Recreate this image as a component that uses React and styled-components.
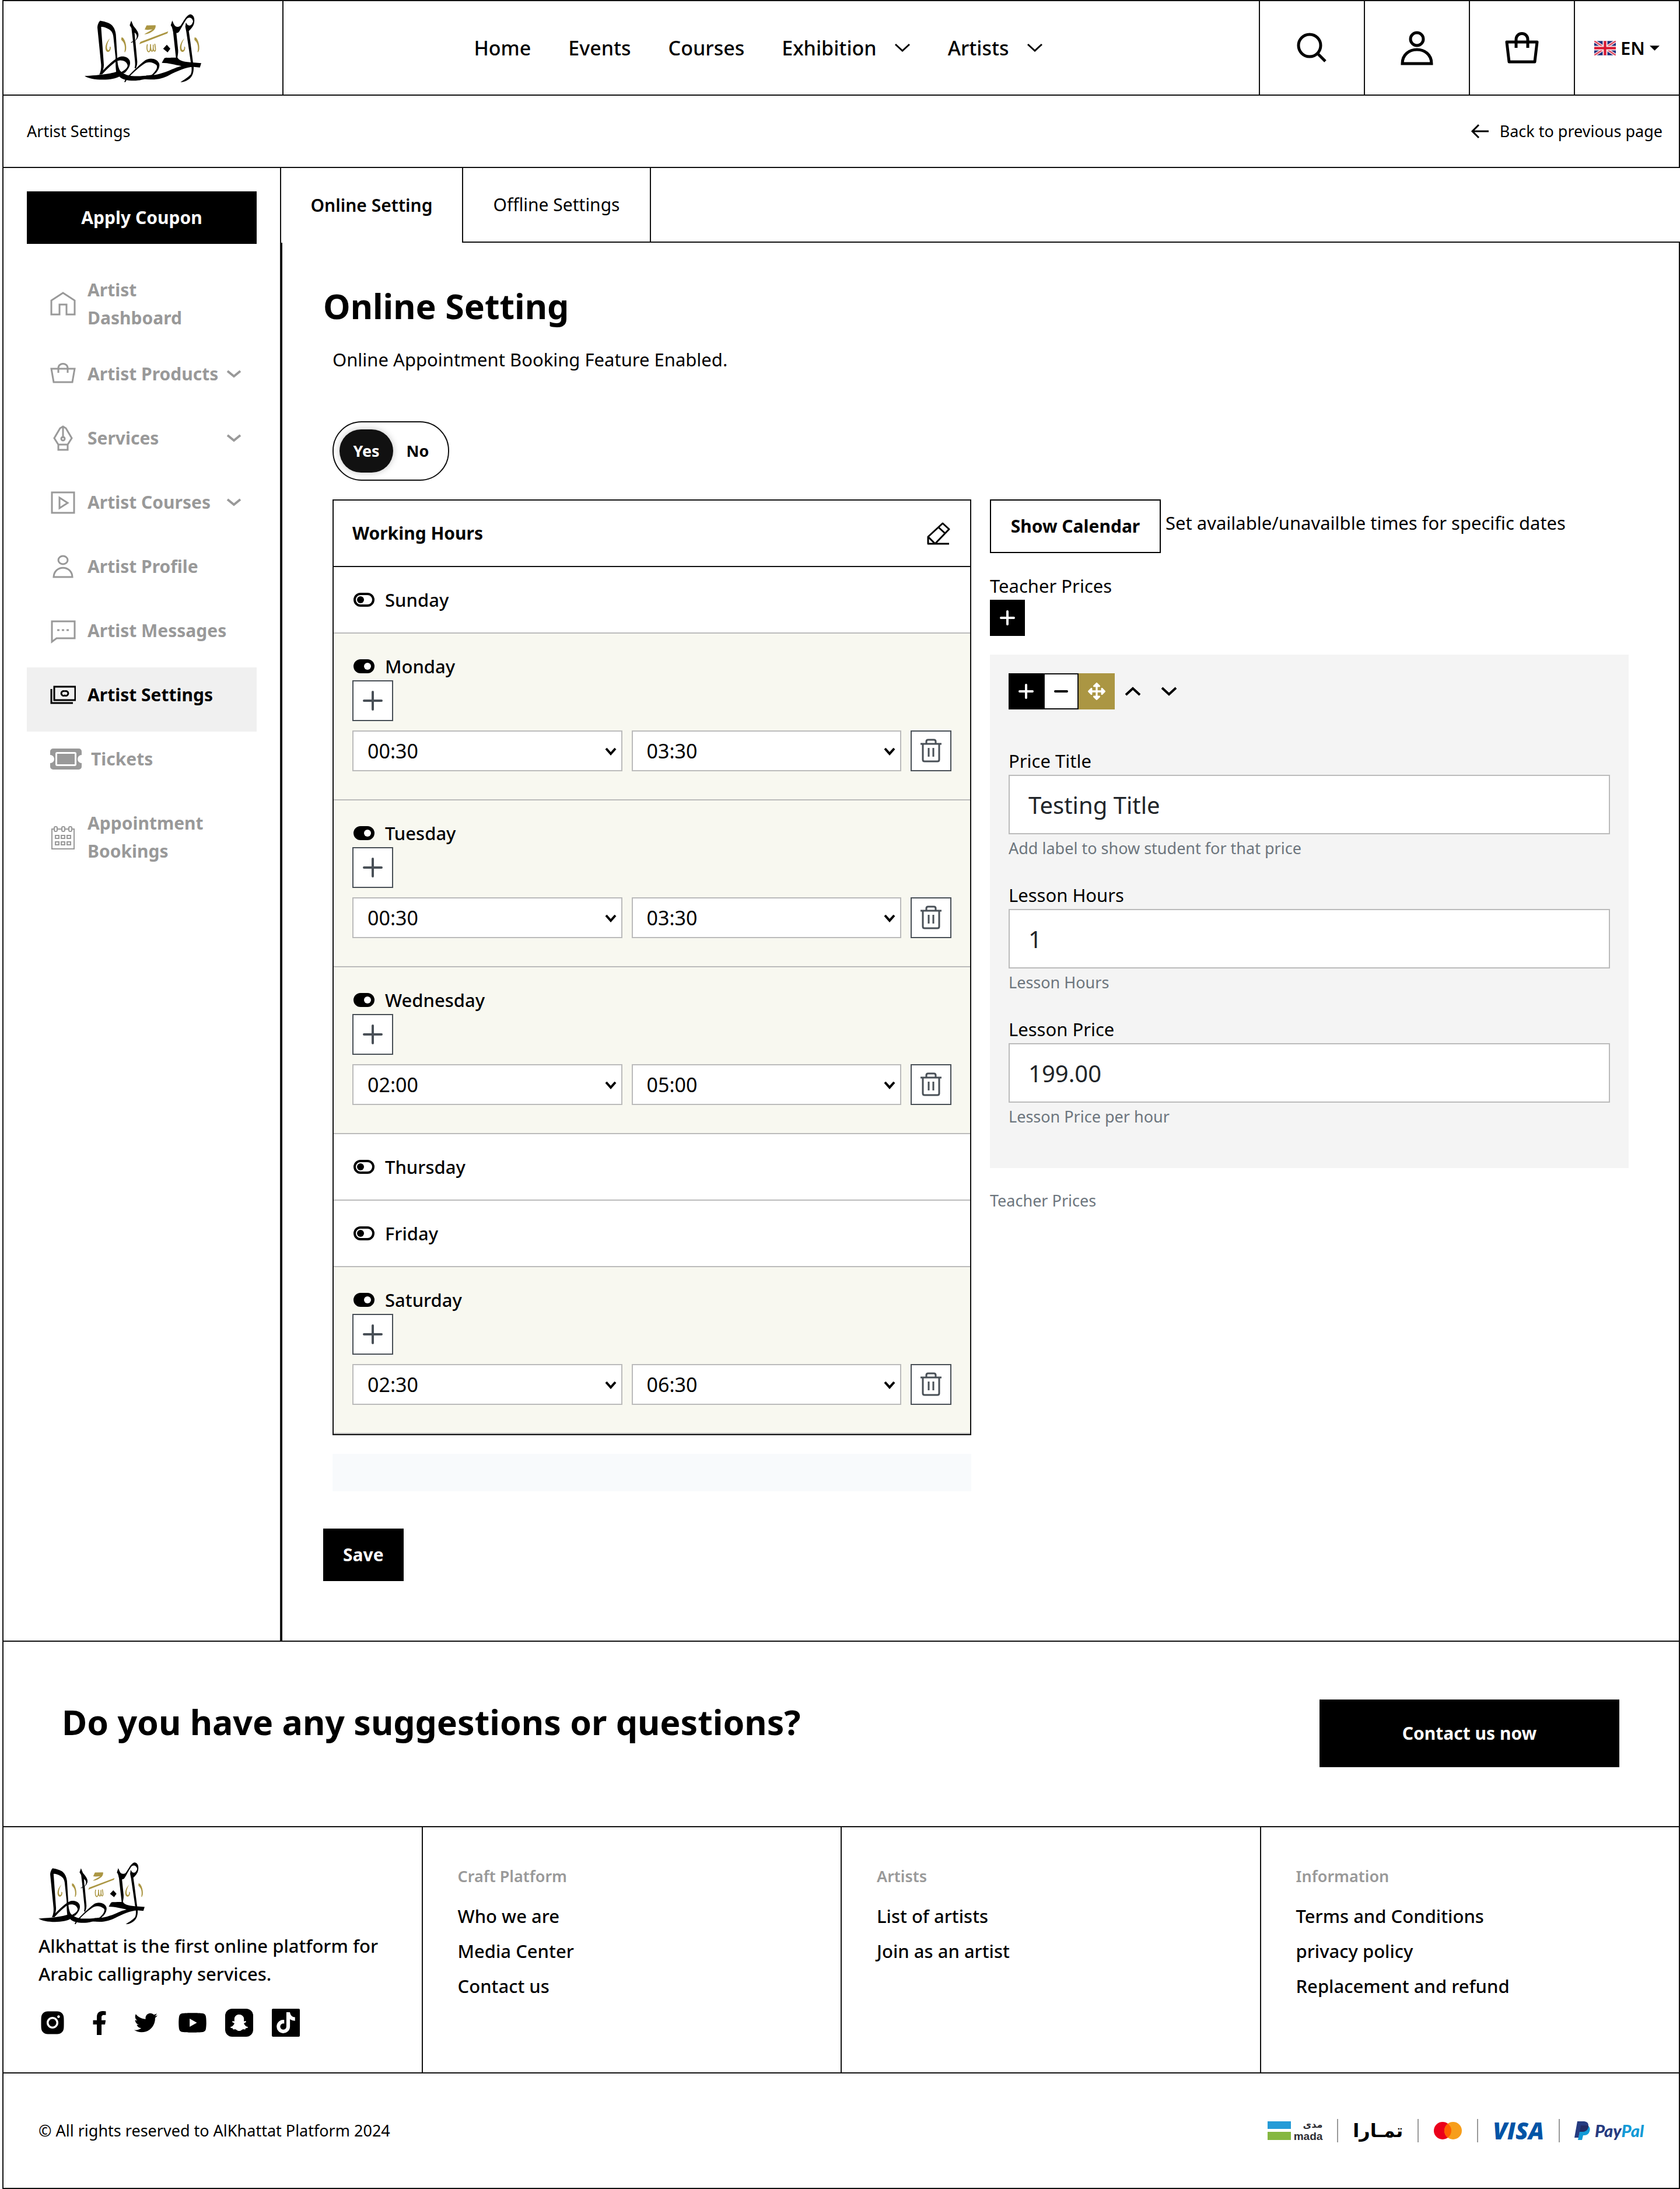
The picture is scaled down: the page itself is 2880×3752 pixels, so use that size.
import React, { useState } from 'react'
import styled, { createGlobalStyle } from 'styled-components'
import { FaFacebookF, FaTwitter, FaYoutube, FaArrowsAlt, FaSnapchatGhost, FaTiktok } from 'react-icons/fa'
import { AiFillInstagram } from 'react-icons/ai'

const GlobalStyle = createGlobalStyle`
  *, *::before, *::after {
    box-sizing: border-box;
  }
  body {
    margin: 0;
    background: #fff;
    color: #000;
    font-family: "Noto Sans", "Liberation Sans", sans-serif;
    font-size: 31px;
    line-height: 48px;
  }
  h1, h2, h3, p, ul {
    margin: 0;
    padding: 0;
  }
  ul {
    list-style: none;
  }
  a {
    color: inherit;
    text-decoration: none;
  }
  button, input, select {
    font: inherit;
    color: inherit;
    border-radius: 0;
  }
  svg {
    display: block;
    flex: none;
  }
`
const Page = styled.div`
  padding-left: 4px;
`
// header
const Header = styled.header`
  display: flex;
  height: 164px;
  border: 2px solid #111;
`
const LogoCell = styled.a`
  display: flex;
  justify-content: center;
  width: 480px;
  padding-top: 22px;
  border-right: 2px solid #111;
`
const Nav = styled.nav`
  display: flex;
  flex: 1;
  align-items: center;
  justify-content: center;
  gap: 64px;
  padding-right: 44px;
  font-size: 34px;
  font-weight: 500;
`
const NavLink = styled.a`
  display: flex;
  align-items: center;
  gap: 30px;
`
const HeaderCell = styled.button`
  display: flex;
  align-items: center;
  justify-content: center;
  gap: 8px;
  width: 180px;
  padding: 0;
  background: none;
  border: 0;
  border-left: 2px solid #111;
  font-size: 31px;
  font-weight: 600;
`
const Breadcrumb = styled.div`
  display: flex;
  align-items: center;
  justify-content: space-between;
  height: 124px;
  padding: 0 28px 0 40px;
  border: solid #111;
  border-width: 0 2px 2px;
  font-size: 27px;
`
const BackLink = styled.a`
  display: flex;
  align-items: center;
  gap: 18px;
`
// body
const Main = styled.main`
  display: flex;
  align-items: stretch;
`
const Sidebar = styled.aside`
  width: 478px;
  flex: none;
  padding: 40px;
  border: solid #111;
  border-width: 0 2px;
`
const DarkButton = styled.button`
  display: block;
  width: ${props => props.$wide ? '100%' : 'auto'};
  height: 90px;
  padding: 0 34px;
  background: #000;
  color: #fff;
  border: 0;
  font-size: 30px;
  font-weight: 700;
`
const Menu = styled.ul`
  margin-top: 32px;
`
const MenuLink = styled.a`
  display: flex;
  align-items: flex-start;
  min-height: 110px;
  padding: 23px 26px 25px 40px;
  background: ${props => props.$active ? '#f0f0f0' : 'none'};
  color: ${props => props.$active ? '#000' : '#999'};
  font-size: 30px;
  font-weight: 700;
`
const MenuRow = styled.span`
  display: flex;
  flex: 1;
  align-items: center;
`
const MenuText = styled.span`
  flex: 1;
  margin-left: ${props => props.$wideIcon ? '16px' : '20px'};
  padding-right: ${props => props.$oneLine ? '0' : '16px'};
  white-space: ${props => props.$oneLine ? 'nowrap' : 'normal'};
`
const Content = styled.section`
  flex: 1;
  display: flex;
  flex-direction: column;
`
const Tabs = styled.div`
  display: flex;
  height: 128px;
`
const Tab = styled.button`
  width: ${props => props.$active ? '312px' : '322px'};
  padding: 0;
  background: none;
  border: solid #111;
  border-width: ${props => props.$active ? '0 2px 0 0' : '0 2px 2px 0'};
  font-size: 30px;
  font-weight: ${props => props.$active ? 600 : 400};
`
const TabsRest = styled.div`
  flex: 1;
  border-bottom: 2px solid #111;
`
const Body = styled.div`
  flex: 1;
  padding: 68px 70px 102px;
  border: solid #111;
  border-width: 0 2px;
`
const Title = styled.h1`
  font-size: 59px;
  line-height: 80px;
  font-weight: 700;
`
const Inner = styled.div`
  padding: 28px 16px 0;
  margin-bottom: 64px;
`
const Intro = styled.p`
  color: #000;
`
const Switch = styled.div`
  display: flex;
  width: 200px;
  height: 102px;
  margin: 82px 0 32px;
  padding: 12px 10px;
  border: 2px solid #111;
  border-radius: 50px;
`
const SwitchOption = styled.label`
  display: flex;
  align-items: center;
  justify-content: center;
  width: ${props => props.$on ? '92px' : '84px'};
  background: ${props => props.$on ? '#111' : 'none'};
  color: ${props => props.$on ? '#fff' : '#000'};
  box-shadow: ${props => props.$on ? '0 0 12px rgba(0, 0, 0, .25)' : 'none'};
  border-radius: 37px;
  font-size: 27px;
  font-weight: 700;
  input {
    position: absolute;
    opacity: 0;
  }
`
const Columns = styled.div`
  display: grid;
  grid-template-columns: 1fr 1fr;
  gap: 32px;
`
const Hours = styled.div`
  border: 2px solid #111;
`
const HoursHead = styled.div`
  display: flex;
  align-items: center;
  justify-content: space-between;
  height: 114px;
  padding: 0 34px 0 32px;
  border-bottom: 2px solid #111;
  h3 {
    font-size: 30px;
    font-weight: 700;
  }
`
const PlainButton = styled.button`
  padding: 0;
  background: none;
  border: 0;
`
const Day = styled.div`
  padding: 32px 32px ${props => props.$open ? '48px' : '32px'};
  background: ${props => props.$open ? '#f8f8f0' : '#fff'};
  border-bottom: 2px solid #bbb;
`
const DayLabel = styled.label`
  display: flex;
  align-items: center;
  gap: 16px;
  font-weight: 500;
  input {
    position: absolute;
    opacity: 0;
  }
`
const SquareButton = styled.button`
  display: flex;
  align-items: center;
  justify-content: center;
  width: 70px;
  height: 70px;
  padding: 0;
  background: #fff;
  border: 2px solid #495057;
  color: #495057;
`
const SlotRow = styled.div`
  display: flex;
  gap: 16px;
  margin-top: 16px;
`
const SelectBox = styled.div`
  position: relative;
  flex: 1;
  select {
    appearance: none;
    width: 100%;
    height: 70px;
    padding: 0 24px;
    background: #fff;
    border: 2px solid #bbb;
    font-size: 34px;
  }
  svg {
    position: absolute;
    right: 10px;
    top: 29px;
    pointer-events: none;
  }
`
const EmptyNotice = styled.div`
  height: 64px;
  margin-top: 32px;
  background: #f8fafc;
`
const CalendarRow = styled.div`
  display: flex;
  gap: 8px;
  margin-bottom: 32px;
  p {
    padding-top: 16px;
  }
`
const OutlineButton = styled.button`
  width: 293px;
  height: 92px;
  padding: 0;
  background: #fff;
  border: 2px solid #000;
  font-size: 30px;
  font-weight: 700;
`
const ToolButton = styled.button`
  display: flex;
  align-items: center;
  justify-content: center;
  width: ${props => props.$kind === 'gold' || props.$kind === 'none' ? '62px' : '60px'};
  height: 62px;
  padding: 0;
  border: ${props => props.$kind === 'light' ? '2px solid #111' : '0'};
  background: ${props => ({ dark: '#000', light: '#fff', gold: '#ab9643', none: 'none' })[props.$kind]};
  color: ${props => props.$kind === 'dark' || props.$kind === 'gold' ? '#fff' : '#000'};
`
const PricePanel = styled.div`
  margin-top: 32px;
  padding: 32px;
  background: #f4f4f4;
`
const Toolbar = styled.div`
  display: flex;
  margin-bottom: 64px;
`
const Field = styled.div`
  margin-bottom: 34px;
  label {
    display: block;
  }
  input {
    display: block;
    width: 100%;
    height: 102px;
    margin-bottom: 2px;
    padding: 0 32px;
    background: #fff;
    border: 2px solid #bbb;
    color: #212529;
    font-size: 40px;
  }
`
const Hint = styled.p`
  margin-top: ${props => props.$spaced ? '34px' : '0'};
  color: #6c757d;
  font-size: 27px;
  line-height: 44px;
`
// footer
const Contact = styled.section`
  display: flex;
  justify-content: space-between;
  height: 320px;
  padding: 99px 102px 0 100px;
  border: 2px solid #111;
  h2 {
    font-size: 59px;
    line-height: 76px;
    font-weight: 700;
  }
`
const ContactLink = styled.a`
  width: 514px;
  height: 116px;
  background: #000;
  color: #fff;
  font-size: 30px;
  line-height: 116px;
  font-weight: 700;
  text-align: center;
`
const FooterGrid = styled.div`
  display: grid;
  grid-template-columns: repeat(4, 1fr);
  height: 422px;
  border: solid #111;
  border-width: 0 0 2px 2px;
`
const FooterCol = styled.div`
  padding: 60px;
  border-right: 2px solid #111;
  font-weight: 500;
  h3 {
    margin-bottom: 20px;
    color: #999;
    font-size: 27px;
    font-weight: 600;
  }
  li {
    margin-bottom: 12px;
  }
  p {
    margin-top: 12px;
  }
`
const Socials = styled.div`
  display: flex;
  gap: 32px;
  margin-top: 36px;
`
const Social = styled.a`
  display: flex;
  align-items: center;
  justify-content: center;
  width: 48px;
  height: 48px;
`
const SocialTile = styled.span`
  display: flex;
  align-items: center;
  justify-content: center;
  width: 48px;
  height: 48px;
  background: #000;
  color: #fff;
  border-radius: ${props => props.$round ? '12px' : '2px'};
`
const Bottom = styled.div`
  display: flex;
  align-items: center;
  justify-content: space-between;
  height: 198px;
  padding: 0 60px;
  border: solid #111;
  border-width: 0 2px 2px;
  font-size: 27px;
`
const Payments = styled.div`
  display: flex;
  align-items: center;
`
const Payment = styled.div`
  display: flex;
  align-items: center;
  height: 40px;
  padding: 0 25px;
  border-left: ${props => props.$first ? '0' : '2px solid #999'};
  &:last-child {
    padding-right: 0;
  }
`
const MadaNames = styled.div`
  display: flex;
  flex-direction: column;
  align-items: flex-end;
  margin-left: 5px;
  color: #2d2d33;
  font-weight: 700;
`
const MadaArabic = styled.span`
  font-family: "DejaVu Sans", sans-serif;
  font-size: 16px;
  line-height: 19px;
`
const MadaLatin = styled.span`
  font-family: "Liberation Sans", sans-serif;
  font-size: 19px;
  line-height: 22px;
`
const TamaraText = styled.span`
  font-family: "DejaVu Sans", sans-serif;
  font-size: 32px;
  line-height: 40px;
  font-weight: 700;
`
const VisaText = styled.span`
  color: #0054a6;
  font-family: "Open Sans", sans-serif;
  font-size: 40px;
  line-height: 40px;
  font-style: italic;
  font-weight: 800;
`
const PayPalText = styled.span`
  margin-left: 8px;
  color: #263b80;
  font-family: Lato, sans-serif;
  font-size: 29px;
  line-height: 32px;
  font-style: italic;
  font-weight: 900;
  b {
    color: #139ad6;
  }
`

const Icon = ({ w = 44, h = 44, sw = 2, children }) => (
  <svg width={ w } height={ h } viewBox={ `0 0 ${w} ${h}` } fill="none" stroke="currentColor" strokeWidth={ sw } aria-hidden="true">
    {children}
  </svg>
)
const Chevron = ({ w = 26, h = 14, sw = 4, up }) => (
  <Icon w={ w } h={ h } sw={ sw }>
    <path d={ up ? `M2 ${h - 2}L${w / 2} 3L${w - 2} ${h - 2}` : `M2 2L${w / 2} ${h - 3}L${w - 2} 2` } />
  </Icon>
)
const Plus = ({ size, sw }) => (
  <Icon w={ size } h={ size } sw={ sw }>
    <path strokeLinecap="round" d={ `M${size / 2} 2V${size - 2}M2 ${size / 2}H${size - 2}` } />
  </Icon>
)

function Logo ({ width, height }) {
  return (
    <svg width={ width } height={ height } viewBox="27 25 600 353" role="img" aria-label="Alkhattat">
      <path d="M107 59C125 62 150 68 165 80C178 92 185 108 188 130L195 245C196 280 200 305 215 325L192 337C185 300 187 270 186 245L176 150C174 125 168 112 150 102C135 93 120 89 112 91L126 285C126 305 120 325 110 334L104 334C110 320 113 305 112 285L93 95C93 80 100 65 107 59Z" />
      <path d="M27 343C60 341 110 338 150 331C175 327 195 321 207 314C225 332 245 341 270 343C310 345 345 343 385 335L372 358C345 360 335 358 320 363C290 371 225 370 206 346C190 355 160 362 120 362C80 362 45 355 27 343Z" />
      <path d="M102 335C130 305 170 263 200 248C222 237 250 245 259 264C267 287 250 312 235 326L213 335L205 328C235 315 250 300 248 288C242 264 215 258 190 268C165 285 135 315 117 335Z" />
      <path d="M267 59L278 85C295 105 306 120 304 135C302 150 290 165 268 172L264 170L276 165L268 97L259 82ZM284 120L287 160C298 150 300 130 284 120Z" fillRule="evenodd" />
      <path d="M275 160L288 160L298 270C298 285 295 295 290 305L284 302C288 290 287 280 286 265Z" />
      <path d="M231 374L239 356C265 330 300 293 338 263C365 245 402 255 411 280C416 300 400 325 385 335L365 344C393 320 405 300 397 287C376 270 350 268 330 283C300 303 263 338 244 362L237 375Z" />
      <path d="M424 276L436 254C440 248 455 250 505 249C512 262 530 270 570 273L627 277L620 300L590 297C550 296 500 320 460 340C430 355 390 368 335 358L345 340C380 344 430 330 470 312C495 300 510 296 525 292C490 286 460 276 424 276Z" />
      <path d="M478 58L486 77C495 95 510 92 520 85C535 65 550 30 570 26C590 28 595 50 590 72C588 85 575 102 563 112L570 160L588 300C588 330 580 355 550 368C540 373 530 375 520 375C535 365 560 350 573 335C580 320 578 300 575 285L550 115L545 90L548 68L556 80C570 90 580 80 585 62C580 40 560 38 550 52C535 75 525 95 515 112C510 122 500 122 499 122L508 210C509 225 506 240 504 250L497 250L482 115C478 100 478 92 470 83Z" />
      <path d="M450 183L468 203L454 222L431 203Z" />
      <g fill="#ab9643">
        <path d="M346 83L392 82C394 90 390 100 385 106C370 120 350 130 334 129C345 120 365 112 376 104L350 106L336 104Z" />
        <path d="M308 180L314 168L457 114L453 124Z" />
        <path d="M216 145L224 146C240 165 243 195 240 210L235 221L232 220C237 195 234 172 216 158Z" />
        <path d="M592 145L600 146C616 165 619 195 616 210L611 221L608 220C613 195 610 172 592 158Z" />
        <path d="M158 150C140 165 128 195 138 214C150 228 164 212 161 194L156 192C158 210 148 216 143 204C140 190 145 168 158 150Z" />
        <path d="M541 150C523 165 511 195 521 214C533 228 547 212 544 194L539 192C541 210 531 216 526 204C523 190 528 168 541 150Z" />
      </g>
      <path d="M350 180C345 200 349 220 358 219C367 216 366 200 366 180C366 200 368 217 375 216C382 212 380 195 380 182M380 200C382 222 394 220 391 198L388 178" fill="none" stroke="#ab9643" strokeWidth="5" />
    </svg>
  )
}

const menuIcons = {
  home: <path d="M2 40V16L22 3L42 16V40H28V23H16V40Z" />,
  bag: <path d="M2 13H42L38 36H6ZM14 20V12C14 2 30 2 30 12V20" />,
  pen: <path d="M22 3V22M17 5L7 22L14 33H30L37 22L27 5L22 2ZM14 33V42H30V33M22 20A3 3 0 1 1 22 26A3 3 0 1 1 22 20" />,
  play: <path d="M3 5H41V40H3ZM16 14V32L30 23Z" />,
  user: <path d="M22 4A8 7 0 1 1 22 18A8 7 0 1 1 22 4M6 40C7 19 37 19 38 40Z" />,
  chat: <path d="M3 6H42V35H11L3 41ZM12 21H16M20 21H24M28 21H32" />,
  money: <path d="M7 8H43V31H7ZM2 12V36H39M25 16A4 4 0 1 1 25 23A4 4 0 1 1 25 16" />,
  calendar: (
    <g strokeWidth="2">
      <path d="M7 8H3V42H41V8H37M13 8H20M25 8H31" />
      <rect x="7" y="4" width="5" height="8" rx="2" />
      <rect x="20" y="4" width="5" height="8" rx="2" />
      <rect x="32" y="4" width="5" height="8" rx="2" />
      <path d="M9 19H15V24H9ZM19 19H25V24H19ZM29 19H35V24H29ZM9 30H15V35H9ZM19 30H25V35H19ZM29 30H35V35H29Z" />
    </g>
  )
}
const menu = [
  { text: 'Artist Dashboard', icon: 'home' },
  { text: 'Artist Products', icon: 'bag', more: true },
  { text: 'Services', icon: 'pen', more: true },
  { text: 'Artist Courses', icon: 'play', more: true },
  { text: 'Artist Profile', icon: 'user' },
  { text: 'Artist Messages', icon: 'chat' },
  { text: 'Artist Settings', icon: 'money', active: true },
  { text: 'Tickets', icon: 'ticket' },
  { text: 'Appointment Bookings', icon: 'calendar' }
]
const week = [
  { name: 'Sunday' },
  { name: 'Monday', from: '00:30', to: '03:30' },
  { name: 'Tuesday', from: '00:30', to: '03:30' },
  { name: 'Wednesday', from: '02:00', to: '05:00' },
  { name: 'Thursday' },
  { name: 'Friday' },
  { name: 'Saturday', from: '02:30', to: '06:30' }
]
const times = Array(48).fill('').map((_, i) => `${String(Math.floor(i / 2)).padStart(2, '0')}:${i % 2 ? '30' : '00'}`)
const fields = [
  { id: 'price-title', label: 'Price Title', value: 'Testing Title', hint: 'Add label to show student for that price' },
  { id: 'lesson-hours', label: 'Lesson Hours', value: '1', hint: 'Lesson Hours' },
  { id: 'lesson-price', label: 'Lesson Price', value: '199.00', hint: 'Lesson Price per hour' }
]
const footerLinks = [
  { title: 'Craft Platform', links: ['Who we are', 'Media Center', 'Contact us'] },
  { title: 'Artists', links: ['List of artists', 'Join as an artist'] },
  { title: 'Information', links: ['Terms and Conditions', 'privacy policy', 'Replacement and refund'] }
]

function TicketIcon () {
  return (
    <svg width="54" height="36" viewBox="0 0 54 36" fill="currentColor" aria-hidden="true">
      <path fillRule="evenodd" d="M5 0H49A5 5 0 0 1 54 5V11A7 7 0 0 0 54 25V31A5 5 0 0 1 49 36H5A5 5 0 0 1 0 31V25A7 7 0 0 0 0 11V5A5 5 0 0 1 5 0ZM12 6A3 3 0 0 0 9 9V27A3 3 0 0 0 12 30H42A3 3 0 0 0 45 27V9A3 3 0 0 0 42 6Z" />
      <rect x="12" y="9" width="30" height="18" />
    </svg>
  )
}

function Flag () {
  return (
    <svg width="37" height="25" viewBox="0 0 36 24" aria-hidden="true">
      <path fill="#1b2f7d" d="M0 0H36V24H0Z" />
      <path stroke="#f3d9de" strokeWidth="5" d="M0 0L36 24M36 0L0 24" />
      <path stroke="#e0435a" strokeWidth="2" d="M0 0L36 24M36 0L0 24" />
      <path stroke="#f6e3e6" strokeWidth="8" d="M18 0V24M0 12H36" />
      <path stroke="#d8152f" strokeWidth="4" d="M18 0V24M0 12H36" />
    </svg>
  )
}

function TimeSelect ({ label, value }) {
  return (
    <SelectBox>
      <select aria-label={ label } defaultValue={ value }>
        {times.map((time) => <option key={ time }>{time}</option>)}
      </select>
      <Chevron w={ 20 } h={ 14 } />
    </SelectBox>
  )
}

function DayRow ({ day }) {
  const [open, setOpen] = useState(Boolean(day.from))
  return (
    <Day $open={ open }>
      <DayLabel>
        <input type="checkbox" checked={ open } onChange={ () => setOpen(!open) } />
        <Icon w={ 40 } h={ 24 } sw={ 4 }>
          <rect x="4" y="2" width="32" height="20" rx="10" fill={ open ? '#000' : 'none' } />
          <circle cx={ open ? 26 : 14 } cy="12" r="6" fill={ open ? '#fff' : '#000' } stroke="none" />
        </Icon>
        {day.name}
      </DayLabel>
      {open && <>
        <SquareButton type="button" aria-label={ 'Add time to ' + day.name }>
          <Plus size={ 34 } sw={ 4 } />
        </SquareButton>
        <SlotRow>
          <TimeSelect label={ day.name + ' from' } value={ day.from } />
          <TimeSelect label={ day.name + ' to' } value={ day.to } />
          <SquareButton type="button" aria-label="Remove time">
            <Icon w={ 36 } h={ 42 } sw={ 3 }>
              <path d="M0 9H36M4 9V36Q4 39 7 39H29Q32 39 32 36V9M10 9V5Q10 2 13 2H23Q26 2 26 5V9M14 16V31M22 16V31" />
            </Icon>
          </SquareButton>
        </SlotRow>
      </>}
    </Day>
  )
}

function SiteHeader () {
  return (
    <>
      <Header>
        <LogoCell href="#"><Logo width={ 200 } height={ 118 } /></LogoCell>
        <Nav>
          <NavLink href="#">Home</NavLink>
          <NavLink href="#">Events</NavLink>
          <NavLink href="#">Courses</NavLink>
          <NavLink href="#">Exhibition <Chevron w={ 28 } h={ 16 } sw={ 3 } /></NavLink>
          <NavLink href="#">Artists <Chevron w={ 28 } h={ 16 } sw={ 3 } /></NavLink>
        </Nav>
        <HeaderCell type="button" aria-label="Search">
          <Icon w={ 54 } h={ 54 } sw={ 5 }><circle cx="23" cy="23" r="19" /><path d="M37 37L50 50" /></Icon>
        </HeaderCell>
        <HeaderCell type="button" aria-label="Account">
          <Icon w={ 56 } h={ 60 } sw={ 5 }><circle cx="28" cy="15" r="11" /><path d="M3 57C3 25 53 25 53 57Z" /></Icon>
        </HeaderCell>
        <HeaderCell type="button" aria-label="Cart">
          <Icon w={ 58 } h={ 56 } sw={ 5 }><path strokeLinejoin="round" d="M3 18H55L51 52H7ZM19 28V14C19 0 39 0 39 14V28" /></Icon>
        </HeaderCell>
        <HeaderCell type="button">
          <Flag />EN
          <svg width="17" height="9" viewBox="0 0 16 8" aria-hidden="true"><path d="M0 0H16L8 8Z" /></svg>
        </HeaderCell>
      </Header>
      <Breadcrumb>
        <span>Artist Settings</span>
        <BackLink href="#">
          <Icon w={ 32 } h={ 26 } sw={ 3 }><path d="M31 13H3M14 2L3 13L14 24" /></Icon>
          Back to previous page
        </BackLink>
      </Breadcrumb>
    </>
  )
}

function SideMenu () {
  return (
    <Sidebar>
      <DarkButton type="button" $wide>Apply Coupon</DarkButton>
      <Menu>
        {menu.map((item) => (
          <li key={ item.text }>
            <MenuLink href="#" $active={ item.active }>
              <MenuRow>
                {item.icon === 'ticket' ? <TicketIcon /> : <Icon sw={ 3 }>{menuIcons[item.icon]}</Icon>}
                <MenuText $wideIcon={ item.icon === 'ticket' } $oneLine={ item.more }>{item.text}</MenuText>
                {item.more && <Chevron />}
              </MenuRow>
            </MenuLink>
          </li>
        ))}
      </Menu>
    </Sidebar>
  )
}

function Prices () {
  return (
    <div>
      <CalendarRow>
        <OutlineButton type="button">Show Calendar</OutlineButton>
        <p>Set available/unavailble times for specific dates</p>
      </CalendarRow>
      <p>Teacher Prices</p>
      <ToolButton type="button" $kind="dark" aria-label="Add price"><Plus size={ 26 } sw={ 4 } /></ToolButton>
      <PricePanel>
        <Toolbar>
          <ToolButton type="button" $kind="dark" aria-label="Add"><Plus size={ 26 } sw={ 4 } /></ToolButton>
          <ToolButton type="button" $kind="light" aria-label="Remove">
            <Icon w={ 26 } h={ 26 } sw={ 4 }><path strokeLinecap="round" d="M3 13H23" /></Icon>
          </ToolButton>
          <ToolButton type="button" $kind="gold" aria-label="Move"><FaArrowsAlt size={ 30 } /></ToolButton>
          <ToolButton type="button" $kind="none" aria-label="Up"><Chevron up w={ 28 } h={ 16 } /></ToolButton>
          <ToolButton type="button" $kind="none" aria-label="Down"><Chevron w={ 28 } h={ 16 } /></ToolButton>
        </Toolbar>
        {fields.map((field) => (
          <Field key={ field.id }>
            <label htmlFor={ field.id }>{field.label}</label>
            <input id={ field.id } type="text" defaultValue={ field.value } />
            <Hint>{field.hint}</Hint>
          </Field>
        ))}
      </PricePanel>
      <Hint $spaced>Teacher Prices</Hint>
    </div>
  )
}

function SiteFooter () {
  return (
    <footer>
      <Contact>
        <h2>Do you have any suggestions or questions?</h2>
        <ContactLink href="#">Contact us now</ContactLink>
      </Contact>
      <FooterGrid>
        <FooterCol>
          <Logo width={ 182 } height={ 107 } />
          <p>Alkhattat is the first online platform for Arabic calligraphy services.</p>
          <Socials>
            <Social href="#" aria-label="Instagram"><AiFillInstagram size={ 50 } /></Social>
            <Social href="#" aria-label="Facebook"><FaFacebookF size={ 41 } /></Social>
            <Social href="#" aria-label="Twitter"><FaTwitter size={ 40 } /></Social>
            <Social href="#" aria-label="Youtube"><FaYoutube size={ 50 } /></Social>
            <Social href="#" aria-label="Snapchat"><SocialTile $round><FaSnapchatGhost size={ 30 } /></SocialTile></Social>
            <Social href="#" aria-label="TikTok"><SocialTile><FaTiktok size={ 36 } /></SocialTile></Social>
          </Socials>
        </FooterCol>
        {footerLinks.map((col) => (
          <FooterCol key={ col.title }>
            <h3>{col.title}</h3>
            <ul>
              {col.links.map((link) => <li key={ link }><a href="#">{link}</a></li>)}
            </ul>
          </FooterCol>
        ))}
      </FooterGrid>
      <Bottom>
        <span>© All rights reserved to AlKhattat Platform 2024</span>
        <Payments>
          <Payment $first>
            <svg width="40" height="32" viewBox="0 0 40 32" aria-hidden="true">
              <path fill="#259bd7" d="M0 0H40V13H0Z" />
              <path fill="#85b740" d="M0 18H40V32H0Z" />
            </svg>
            <MadaNames>
              <MadaArabic>مدى</MadaArabic>
              <MadaLatin>mada</MadaLatin>
            </MadaNames>
          </Payment>
          <Payment><TamaraText>تمـارا</TamaraText></Payment>
          <Payment>
            <svg width="50" height="32" viewBox="0 0 50 32" role="img" aria-label="Mastercard">
              <circle cx="16" cy="16" r="15" fill="#eb001b" />
              <circle cx="34" cy="16" r="15" fill="#f79e1b" />
              <path fill="#ff5f00" d="M25 4A15 15 0 0 1 25 28A15 15 0 0 1 25 4Z" />
            </svg>
          </Payment>
          <Payment><VisaText>VISA</VisaText></Payment>
          <Payment>
            <svg width="27" height="32" viewBox="0 0 27 32" aria-hidden="true">
              <path fill="#139ad6" d="M11 7H23Q28 11 26 17Q24 24 17 24H15L13 32H6Z" />
              <path fill="#263b80" d="M5 0H17Q25 1 24 9Q22 18 13 18H9L7 28H0Z" />
              <path fill="#232c65" d="M11 7H23Q25 8 24 10Q22 18 13 18H9Z" />
            </svg>
            <PayPalText>Pay<b>Pal</b></PayPalText>
          </Payment>
        </Payments>
      </Bottom>
    </footer>
  )
}

export default function App () {
  const [enabled, setEnabled] = useState('Yes')
  return (
    <Page>
      <GlobalStyle />
      <SiteHeader />
      <Main>
        <SideMenu />
        <Content>
          <Tabs>
            <Tab type="button" $active>Online Setting</Tab>
            <Tab type="button">Offline Settings</Tab>
            <TabsRest />
          </Tabs>
          <Body>
            <Title>Online Setting</Title>
            <Inner>
              <Intro>Online Appointment Booking Feature Enabled.</Intro>
              <Switch>
                {['Yes', 'No'].map((option) => (
                  <SwitchOption key={ option } $on={ enabled === option }>
                    <input type="radio" name="enabled" checked={ enabled === option } onChange={ () => setEnabled(option) } />
                    {option}
                  </SwitchOption>
                ))}
              </Switch>
              <Columns>
                <div>
                  <Hours>
                    <HoursHead>
                      <h3>Working Hours</h3>
                      <PlainButton type="button" aria-label="Edit working hours">
                        <Icon w={ 40 } h={ 40 } sw={ 3 }>
                          <path strokeLinejoin="round" d="M2 38V26L27 3L38 13L14 38ZM20 10L31 20M2 26L14 38H38" />
                        </Icon>
                      </PlainButton>
                    </HoursHead>
                    {week.map((day) => <DayRow key={ day.name } day={ day } />)}
                  </Hours>
                  <EmptyNotice />
                </div>
                <Prices />
              </Columns>
            </Inner>
            <DarkButton type="button">Save</DarkButton>
          </Body>
        </Content>
      </Main>
      <SiteFooter />
    </Page>
  )
}
